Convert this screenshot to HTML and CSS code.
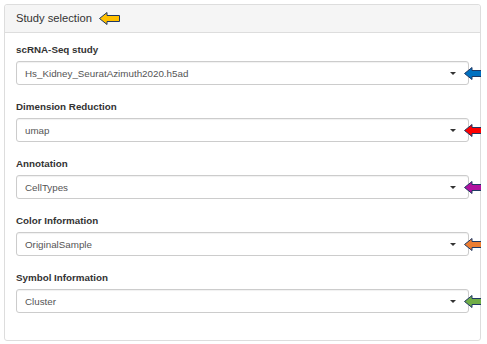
FILE: index.html
```html
<!DOCTYPE html>
<html>
<head>
	<title>Study selection</title>
<link rel="stylesheet" href="styles.css">
</head>
<body>
	<div class="panel">
		<div class="panel-heading">
			<span class="panel-title">Study selection</span>
			<svg class="arrow" width="23" height="15" viewBox="0 0 23 15"><path d="M1.5 7.5 L9 1.5 L9 4.5 L21.5 4.5 L21.5 10.5 L9 10.5 L9 13.5 Z" fill="#ffc000"/></svg>
		</div>

		<div class="panel-body">
			<div class="form-group">
				<label>scRNA-Seq study</label>
				<div class="select"><span>Hs_Kidney_SeuratAzimuth2020.h5ad</span><span class="caret"></span></div>
				<svg class="arrow side" width="23" height="15" viewBox="0 0 23 15"><path d="M1.5 7.5 L9 1.5 L9 4.5 L21.5 4.5 L21.5 10.5 L9 10.5 L9 13.5 Z" fill="#0070c0"/></svg>
			</div>

			<div class="form-group">
				<label>Dimension Reduction</label>
				<div class="select"><span>umap</span><span class="caret"></span></div>
				<svg class="arrow side" width="23" height="15" viewBox="0 0 23 15"><path d="M1.5 7.5 L9 1.5 L9 4.5 L21.5 4.5 L21.5 10.5 L9 10.5 L9 13.5 Z" fill="#ff0000"/></svg>
			</div>

			<div class="form-group">
				<label>Annotation</label>
				<div class="select"><span>CellTypes</span><span class="caret"></span></div>
				<svg class="arrow side" width="23" height="15" viewBox="0 0 23 15"><path d="M1.5 7.5 L9 1.5 L9 4.5 L21.5 4.5 L21.5 10.5 L9 10.5 L9 13.5 Z" fill="#b0119f"/></svg>
			</div>

			<div class="form-group">
				<label>Color Information</label>
				<div class="select"><span>OriginalSample</span><span class="caret"></span></div>
				<svg class="arrow side" width="23" height="15" viewBox="0 0 23 15"><path d="M1.5 7.5 L9 1.5 L9 4.5 L21.5 4.5 L21.5 10.5 L9 10.5 L9 13.5 Z" fill="#ed7d31"/></svg>
			</div>

			<div class="form-group">
				<label>Symbol Information</label>
				<div class="select"><span>Cluster</span><span class="caret"></span></div>
				<svg class="arrow side" width="23" height="15" viewBox="0 0 23 15"><path d="M1.5 7.5 L9 1.5 L9 4.5 L21.5 4.5 L21.5 10.5 L9 10.5 L9 13.5 Z" fill="#70ad47"/></svg>
			</div>
		</div>
	</div>
</body>
</html>
```

FILE: styles.css
```css
body {
  margin: 4px 6px 4px 4px;
  background-color: #fff;
  font-family: "Liberation Sans", Arial, sans-serif;
  color: #333;
}

.panel {
  border: 1px solid #ddd;
  border-radius: 3px;
  background-color: #fff;
}

.panel-heading {
  display: flex;
  align-items: center;
  gap: 6px;
  padding: 6px 11px;
  height: 15px;
  background-color: #f5f5f5;
  border-bottom: 1px solid #ddd;
  border-radius: 3px 3px 0 0;
}

.panel-title {
  font-size: 11.2px;
  line-height: 15px;
  color: #333;
}

.panel-body {
  display: flex;
  flex-direction: column;
  gap: 15px;
  padding: 10px 11px 27px;
}

.form-group {
  position: relative;
  display: flex;
  flex-direction: column;
}

.form-group label {
  font-size: 9.8px;
  font-weight: bold;
  line-height: 13px;
  margin-bottom: 5px;
  color: #333;
}

.select {
  display: flex;
  align-items: center;
  justify-content: space-between;
  height: 22px;
  padding: 0 12px 0 8px;
  border: 1px solid #ccc;
  border-radius: 3px;
  font-size: 9.8px;
  color: #555;
  box-shadow: inset 0 1px 1px rgba(0, 0, 0, 0.06);
}

.caret {
  width: 0;
  height: 0;
  border-left: 3px solid transparent;
  border-right: 3px solid transparent;
  border-top: 3px solid #333;
}

.arrow path {
  stroke: #1f3864;
  stroke-width: 1;
  stroke-linejoin: miter;
}

.arrow.side {
  position: absolute;
  left: calc(100% - 6px);
  bottom: 4px;
}
```
